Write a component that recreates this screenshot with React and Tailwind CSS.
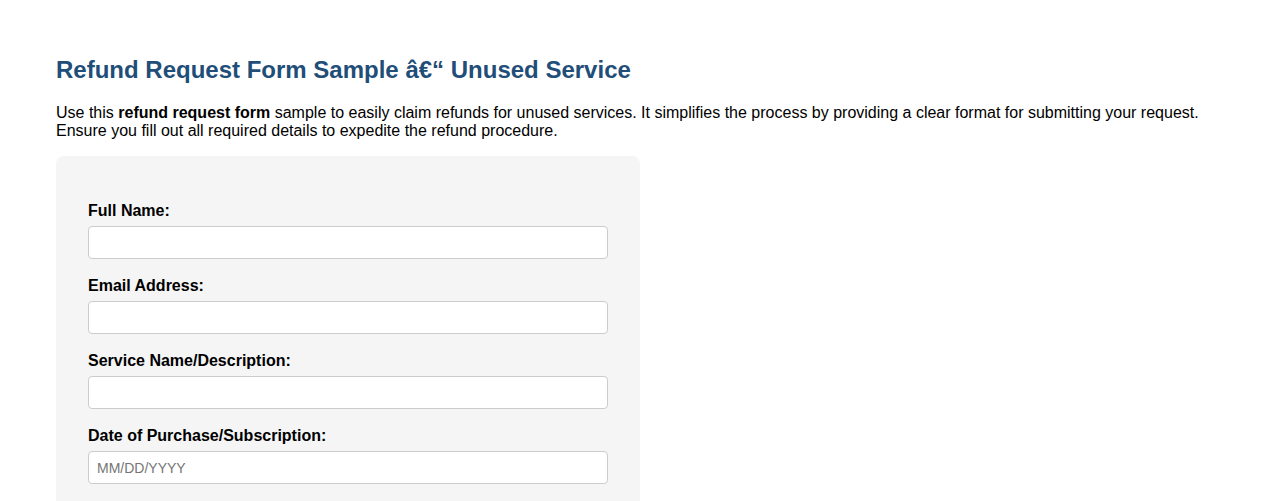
import React from 'react';

const fields = [
  { label: 'Full Name:', type: 'text' },
  { label: 'Email Address:', type: 'email' },
  { label: 'Service Name/Description:', type: 'text' },
  { label: 'Date of Purchase/Subscription:', type: 'text', placeholder: 'MM/DD/YYYY' },
];

const App = () => {
  return (
    <div className="min-h-screen bg-white px-[56px] pt-[56px] font-['Liberation_Sans',Arial,sans-serif] text-black">
      <h2 className="text-[24px] leading-[28px] font-bold text-[#1f4e79]">
        Refund Request Form Sample â€“ Unused Service
      </h2>

      <p className="mt-[20px] text-[16px] leading-[18px]">
        Use this <strong>refund request form</strong> sample to easily claim refunds for unused services. It simplifies the process by providing a clear format for submitting your request. Ensure you fill out all required details to expedite the refund procedure.
      </p>

      <form className="mt-[16px] w-[584px] rounded-lg bg-[#f5f5f5] px-8 pt-[46px] pb-8">
        <div className="flex flex-col gap-[18px]">
          {fields.map((f) => (
            <div key={f.label}>
              <label className="mb-[6px] block text-[16px] leading-[18px] font-bold">
                {f.label}
              </label>
              <input
                type={f.type}
                placeholder={f.placeholder}
                className="block h-[33px] w-full rounded border border-[#cccccc] bg-white px-2 text-[14px] placeholder:text-[#757575] outline-none"
              />
            </div>
          ))}
        </div>
      </form>
    </div>
  );
};

export default App;
